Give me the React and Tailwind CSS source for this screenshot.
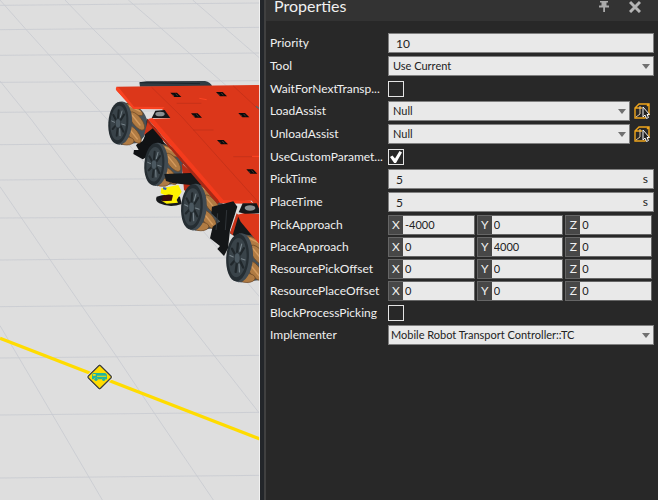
import React from "react";

const VECTORS = [
    { name: "PickApproach", values: ["-4000", "0", "0"] },
    { name: "PlaceApproach", values: ["0", "4000", "0"] },
    { name: "ResourcePickOffset", values: ["0", "0", "0"] },
    { name: "ResourcePlaceOffset", values: ["0", "0", "0"] },
];

const GRID = [
    "M0 16 L780 9", "M0 89 L780 82", "M0 166 L780 159", "M0 247 L780 242",
    "M0 337 L780 330", "M0 434 L780 428", "M0 540 L780 534", "M0 654 L780 650",
    "M0 780 L780 773", "M0 920 L780 913", "M0 1074 L780 1066", "M0 1245 L780 1237",
    "M0 1434 L780 1426",
    "M0 0 L75 85 L218 243 L325 362 L780 892",
    "M0 243 L95 360 L208 510 L390 742 L522 913 L780 1242",
    "M195 0 L280 88 L440 245 L780 600",
    "M385 0 L480 82 L680 258", "M578 0 L780 175",
    "M0 560 L192 840 L350 1070 L460 1235 L640 1500",
    "M0 977 L155 1240 L307 1500",
];

const SLOTS = [[527, 285], [664, 283], [589, 347], [731, 346], [667, 427], [755, 515], [755, 645]];

const Wheel = ({ x, y, s = 1 }) => (
    <g transform={`translate(${x} ${y}) scale(${s})`}>
        <path d="M0 -64 L40 -58 Q84 -35 84 5 Q82 46 52 60 L5 66Z" fill="#465159" />
        <g fill="#b07b43" stroke="#6b4624" strokeWidth="2">
            <ellipse cx="42" cy="-40" rx="11" ry="32" transform="rotate(-62 42 -40)" />
            <ellipse cx="53" cy="-6" rx="14" ry="33" transform="rotate(-38 53 -6)" />
            <ellipse cx="43" cy="34" rx="14" ry="32" transform="rotate(-38 43 34)" />
            <ellipse cx="22" cy="54" rx="22" ry="12" />
        </g>
        <g fill="none" stroke="#d49b5e" strokeWidth="4" strokeLinecap="round">
            <path d="M38 -24 L62 6" />
            <path d="M30 18 L54 48" />
            <path d="M30 -51 L62 -35" />
        </g>
        <ellipse cx="4" cy="0" rx="34" ry="65" fill="#414b52" transform="rotate(4)" />
        <ellipse cx="-3" cy="0" rx="30" ry="63" fill="#252d32" transform="rotate(4)" />
        <ellipse cx="-3" cy="0" rx="24" ry="52" fill="#394349" transform="rotate(4)" />
        <g stroke="#20272b" strokeWidth="6" strokeLinecap="round">
            <path d="M-4 -15 L-2 -38" />
            <path d="M4 -9 L14 -25" />
            <path d="M4 9 L12 26" />
            <path d="M-5 15 L-8 38" />
            <path d="M-11 8 L-20 18" />
            <path d="M-10 -9 L-18 -24" />
        </g>
        <g stroke="#77838a" strokeWidth="3" strokeLinecap="round">
            <path d="M3 -17 L8 -36" />
            <path d="M7 3 L17 6" />
            <path d="M1 17 L2 38" />
            <path d="M-14 -2 L-23 -6" />
        </g>
        <ellipse cx="-4" cy="1" rx="8" ry="14" fill="#4b5860" stroke="#272f34" strokeWidth="2" />
    </g>
);

const Scene = () => (
    <svg viewBox="0 0 780 1500" preserveAspectRatio="xMidYMid slice" className="w-full h-full" role="img" aria-label="3D view">
        <rect width="780" height="1500" fill="#dedede" />
        <g fill="none" stroke="#c8cad0" strokeWidth="2.4">
            {GRID.map((d) => <path key={d} d={d} />)}
        </g>

        {/* mobile robot */}
        <path d="M418 247 L440 244 L615 243 Q632 246 637 260 L420 260Z" fill="#303c43" />
        <path d="M420 248 L600 251" stroke="#19252c" strokeWidth="3" />
        <path d="M438 384 L500 435 L470 455 L428 478 L400 462 L402 450 L416 450 L408 436 L418 426 L432 424Z" fill="#101214" />
        <Wheel x={358} y={369} />
        <path d="M440 355 L440 400 L424 430 L500 450 L480 400Z" fill="#101214" />
        <path d="M432 405 L444 360 L462 382Z" fill="#cf3519" />
        <Wheel x={466} y={493} />
        <path d="M545 490 L620 560 L610 610 L552 570Z" fill="#b92c15" />
        <path d="M470 590 Q500 578 540 590 L545 612 Q510 625 478 610 Q464 602 470 590Z" fill="#16181a" />
        <path d="M484 565 L535 555 L545 575 L530 600 L534 608 L500 611 L484 602 L514 594 L482 580Z" fill="#fff200" />
        <path d="M488 588 Q505 580 519 586 L515 602 L486 604Z" fill="#3b0c0c" />
        <path d="M490 561 L500 564 L498 570 L489 568Z" fill="#315ea8" />
        <path d="M493 522 L588 518 L618 540 L600 558 L550 553 L520 550 L498 543Z" fill="#15181a" />
        <Wheel x={579} y={621} s={1.08} />
        <path d="M690 700 L712 645 L780 690 L780 735 L720 720Z" fill="#15181a" />
        <Wheel x={716} y={773} s={1.13} />
        <path d="M350 260 L780 255 L780 640 L755 602 L660 605 L444 357 L510 355 L486 327 L400 327 L349 270Z" fill="#dc371a" />
        <path d="M350 260 Q345 266 350 272 L400 327 L488 328 L494 321 L402 320 L358 265Z" fill="#f94221" />
        <path d="M444 357 L458 354 L672 602 L655 606Z" fill="#f43b1c" />
        <path d="M442 357 L442 366 L652 612 L660 606Z" fill="#a82815" />
        <path d="M655 600 L750 602 L780 626 L780 640 L744 611 L660 610Z" fill="#f43d1f" />
        <path d="M712 644 L736 638 L780 642 L780 735 L722 665Z" fill="#dc371a" />
        <path d="M716 637 L728 610 L770 610 L780 632 L780 640 L735 641Z" fill="#151719" />
        <ellipse cx="750" cy="624" rx="16" ry="8" fill="#8b9092" />
        <path d="M636 620 L700 604 L712 620 L690 690 L684 745 L672 768 L652 747 L660 738 L630 715 L638 680 L660 664 L634 640Z" fill="#141618" />
        <path d="M653 640 L648 690 M680 630 L676 690" stroke="#303438" strokeWidth="3" />
        <path d="M690 698 L710 640 L716 646 L698 706Z" fill="#c93218" />
        <path d="M455 354 L466 332 L494 330 L511 354Z" fill="#151719" />
        <ellipse cx="480" cy="342" rx="14" ry="7" fill="#8b9092" />
        <g fill="none" stroke="#b22d18" strokeWidth="1.5">
            <path d="M455 262 L545 350 L780 612" />
            <path d="M700 258 L780 332" />
            <path d="M530 310 H604 M580 390 H640 M700 470 H760" />
        </g>
        <path d="M598 295 L620 299 M756 469 H780" stroke="#ff4524" strokeWidth="3" />
        <path d="M768 319 L780 327" stroke="#5d6264" strokeWidth="4" />
        {SLOTS.slice(0, 6).map(([x, y]) => (
            <g key={`${x}-${y}`}>
                <path d={`M${x - 16} ${y - 7} h20 l13 13 h-21z`} fill="#090b0c" />
                <path d={`M${x} ${y - 4} l6 7 m-15 -5 l4 5`} stroke="#6b4b43" strokeWidth="2" />
            </g>
        ))}

        {/* guide path with its vehicle marker */}
        <path d="M0 1015 L780 1317" stroke="#ffdc00" strokeWidth="10" />
        <rect x="-26" y="-26" width="52" height="52" rx="4" transform="translate(299 1131) rotate(45)" fill="#ffdc00" stroke="#f4f4f4" strokeWidth="8" />
        <rect x="-26" y="-26" width="52" height="52" rx="4" transform="translate(299 1131) rotate(45)" fill="#ffdc00" stroke="#424242" strokeWidth="4" />
        <g transform="translate(276 1118)">
            <path d="M3 1 H40 L45 6 V20 H41 A7 7 0 0 0 29 20 H18 A7 7 0 0 0 5 20 H0 V6Z" fill="#20b5a0" />
            <path d="M3 4 H11 V9 H2Z M15 9 H43 V12 H15Z" fill="#ffdc00" />
            <circle cx="12" cy="20" r="5" fill="#20b5a0" />
            <circle cx="35" cy="20" r="5" fill="#20b5a0" />
        </g>
        <path d="M779 0 V1500" stroke="#f5f5f5" strokeWidth="3" />
    </svg>
);

const Row = ({ name, label, tight, children }) => (
    <div className={tight ? "flex items-center h-5 mb-0.5" : "flex items-center h-5 mb-[3px]"}>
        <label htmlFor={name} className="w-[118px] shrink-0 whitespace-nowrap text-[#f0f0f0]">
            {label || name}
        </label>
        {children}
    </div>
);

const TextField = ({ name, value, unit }) => (
    <Row name={name}>
        <div className="relative flex-1">
            <input
                id={name}
                defaultValue={value}
                className="block w-full h-5 pl-[7px] pr-4 border border-[#808080] bg-[#e9e9e9] text-[#222]"
            />
            {unit && <span className="absolute right-1.5 top-0 leading-5 text-[#222]">{unit}</span>}
        </div>
    </Row>
);

const SelectField = ({ name, value, pick, last }) => (
    <Row name={name}>
        <div className="relative flex-1">
            <select
                id={name}
                className={`block w-full h-5 border border-[#808080] bg-[#e9e9e9] text-[11px] text-[#222] appearance-none ${last ? "pl-0.5" : "pl-1"}`}
            >
                <option>{value}</option>
            </select>
            <svg viewBox="0 0 8 5" className="absolute right-1 top-2 w-2 h-[5px] pointer-events-none">
                <path d="M0 0 H8 L4 5Z" fill="#707070" />
            </svg>
        </div>
        {pick && (
            <button type="button" aria-label={`Pick ${name}`} className="ml-1 mr-1 w-4 h-4 shrink-0">
                <svg viewBox="0 0 16 16" className="w-4 h-4" fill="none">
                    <path d="M1 5 L5 1 H15 V11 L11 15 H1Z M1 5 H8 M13 3 L15 1" stroke="#f0a51b" strokeWidth="1.4" />
                    <path d="M6 3 V11 L2 14" stroke="#e3c8a0" />
                    <path d="M9 4 V14 L11 12 L12.5 15.5 L14.5 14.5 L13 11.5 H15.5Z" fill="#222" stroke="#f4f4f4" />
                </svg>
            </button>
        )}
    </Row>
);

const CheckField = ({ name, label, checked }) => (
    <Row name={name} label={label} tight>
        <div className="relative w-4 h-4">
            <input
                id={name}
                type="checkbox"
                defaultChecked={checked}
                className="peer block w-4 h-4 border border-[#e4e4e4] appearance-none"
            />
            <svg viewBox="0 0 16 16" className="hidden peer-checked:block absolute inset-0 w-4 h-4 pointer-events-none">
                <path d="M2 8 L4.5 6.5 L7 9.5 L11.5 2 L14 3.5 L8 14 H6.2Z" fill="#fff" />
            </svg>
        </div>
    </Row>
);

const VectorField = ({ name, values }) => (
    <Row name={`${name}-X`} label={name} tight>
        <div className="grid grid-cols-3 gap-0.5 flex-1 pr-0.5">
            {["X", "Y", "Z"].map((axis, i) => (
                <div key={axis} className="flex h-5 border border-[#666]">
                    <span className="w-3.5 shrink-0 bg-[#474747] text-[#f0f0f0] text-center leading-[18px]">{axis}</span>
                    <input
                        id={`${name}-${axis}`}
                        aria-label={`${name} ${axis}`}
                        defaultValue={values[i]}
                        className="flex-1 min-w-0 pl-0.5 bg-[#e9e9e9] text-[11px] text-[#222]"
                    />
                </div>
            ))}
        </div>
    </Row>
);

const App = () => {
    return (
        <div className="flex h-screen overflow-hidden bg-[#282828] font-['Lato','Open_Sans',sans-serif] text-[12px]">
            <main className="flex-1 min-w-0">
                <Scene />
            </main>
            <aside className="w-[398px] shrink-0 border-l-4 border-[#23262a]">
                <div className="h-full border-l-2 border-[#404040]">
                    <header className="flex items-start h-[21px] pl-2 pr-[17px] bg-[#333]">
                        <h1 className="flex-1 text-[16px] leading-3 text-[#f0f0f0]">Properties</h1>
                        <button aria-label="Pin" className="mr-5">
                            <svg viewBox="0 0 10 12" className="w-2.5 h-3" fill="#aaa">
                                <path d="M1 1 H9 V2.5 H7.5 V5.5 H10 V7.5 H6 V12 H4.2 V7.5 H0 V5.5 H2.5 V2.5 H1Z" />
                            </svg>
                        </button>
                        <button aria-label="Close">
                            <svg viewBox="0 0 12 13" className="w-3 h-[13px]" stroke="#b5b5b5" strokeWidth="3">
                                <path d="M1 2 L11 12 M11 2 L1 12" />
                            </svg>
                        </button>
                    </header>
                    <form className="pt-3 pl-1 pr-1">
                        <TextField name="Priority" value="10" />
                        <SelectField name="Tool" value="Use Current" />
                        <CheckField name="WaitForNextTransport" label="WaitForNextTransp..." />
                        <SelectField name="LoadAssist" value="Null" pick />
                        <SelectField name="UnloadAssist" value="Null" pick />
                        <CheckField name="UseCustomParameters" label="UseCustomParamet..." checked />
                        <TextField name="PickTime" value="5" unit="s" />
                        <TextField name="PlaceTime" value="5" unit="s" />
                        {VECTORS.map((v) => (
                            <VectorField key={v.name} name={v.name} values={v.values} />
                        ))}
                        <CheckField name="BlockProcessPicking" />
                        <SelectField name="Implementer" value="Mobile Robot Transport Controller::TC" last />
                    </form>
                </div>
            </aside>
        </div>
    );
};

export default App;
